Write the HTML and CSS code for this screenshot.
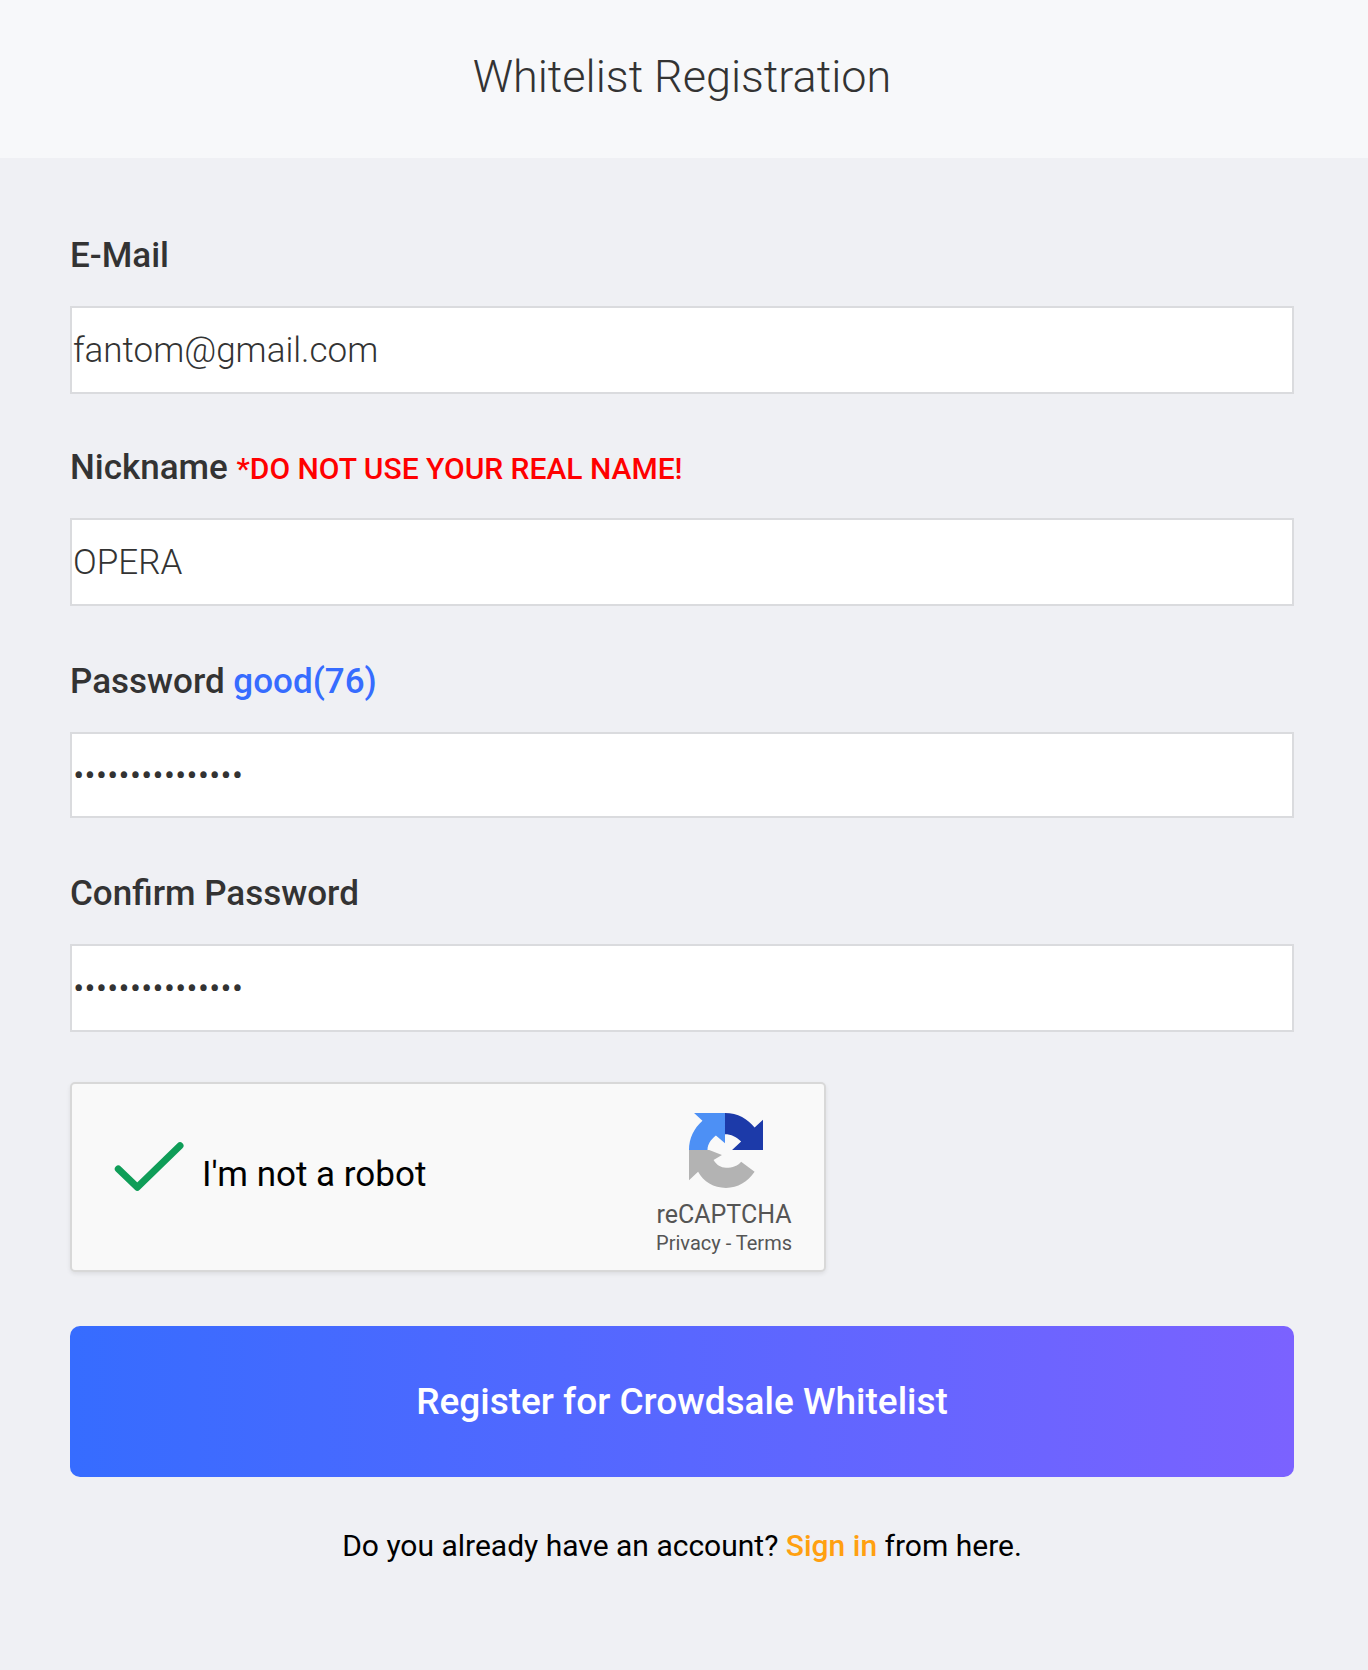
FILE: index.html
```html
<!DOCTYPE html>
<html lang="en">
<head>
    <meta charset="UTF-8">
    <meta name="viewport" content="width=device-width, initial-scale=1.0">
    <title>Whitelist Registration</title>
    <link rel="stylesheet" href="styles.css">
</head>
<body>
    <header class="page-header">
        <h1>Whitelist Registration</h1>
    </header>

    <form class="register-form">
        <div class="field field-email">
            <label for="email">E-Mail</label>
            <input class="text-input" id="email" type="text" value="fantom@gmail.com">
        </div>

        <div class="field field-nickname">
            <label for="nickname">Nickname <span class="warning">*DO NOT USE YOUR REAL NAME!</span></label>
            <input class="text-input" id="nickname" type="text" value="OPERA">
        </div>

        <div class="field field-password">
            <label for="password">Password <span class="strength">good(76)</span></label>
            <input class="text-input" id="password" type="password" value="abcdefghijklmno">
        </div>

        <div class="field field-confirm">
            <label for="confirm">Confirm Password</label>
            <input class="text-input" id="confirm" type="password" value="abcdefghijklmno">
        </div>

        <div class="captcha">
            <svg class="captcha-check" viewBox="0 0 70 52">
                <path d="M4.3 28 L23.3 46.3 L66 4.7" fill="none" stroke="#0f9d58" stroke-width="7" stroke-linecap="round" stroke-linejoin="round"/>
            </svg>
            <span class="captcha-text">I'm not a robot</span>
            <div class="captcha-brand">
                <svg class="captcha-logo" viewBox="15 15 220 223">
                    <path fill="#4d90f5" d="M30 15 H122 V105 L95 82 C80 94 70 108 70 125 H15 C15 90 30 60 55 38 Z"/>
                    <path fill="#1c3aa9" d="M122 15 C160 15 190 33 210 58 L235 35 V125 H143 L170 100 C157 86 140 78 122 78 Z"/>
                    <path fill="#b3b3b3" d="M15 125 H75 L113 140 L88 155 C97 170 110 178 125 178 C145 178 160 172 170 160 L210 190 C190 220 160 238 125 238 C88 238 58 220 42 190 L15 215 Z"/>
                </svg>
                <div class="captcha-name">reCAPTCHA</div>
                <div class="captcha-links">Privacy - Terms</div>
            </div>
        </div>

        <button class="btn-register" type="button">Register for Crowdsale Whitelist</button>

        <p class="signin">Do you already have an account? <a href="#">Sign in</a> from here.</p>
    </form>
</body>
</html>
```

FILE: styles.css
```css
body {
    font-family: Roboto, 'Liberation Sans', sans-serif;
    background-color: #eff0f4;
    color: #333;
    margin: 0;
}

.page-header {
    box-sizing: border-box;
    background-color: #f7f8fa;
    height: 158px;
    padding: 0 74px 6px 70px;
    display: flex;
    justify-content: center;
    align-items: center;
}

h1 {
    font-size: 45px;
    font-weight: 300;
    margin: 0;
}

.register-form {
    padding: 78px 74px 0 70px;
}

.field {
    margin-bottom: 55px;
}

.field label {
    display: block;
    font-size: 35px;
    font-weight: 500;
    line-height: 40px;
    margin-bottom: 30px;
}

.field-email {
    margin-bottom: 54px;
}

.field-nickname {
    margin-bottom: 56px;
}

.field-password {
    margin-bottom: 56px;
}

.field-password .text-input {
    height: 86px;
}

.field-confirm {
    margin-bottom: 50px;
}

.warning {
    color: #ff0000;
    font-size: 30px;
    line-height: 1;
}

.strength {
    color: #366cff;
}

.text-input {
    display: block;
    box-sizing: border-box;
    width: 100%;
    height: 88px;
    padding: 0 1px;
    background-color: #fff;
    border: 2px solid #dadbde;
    font-family: Roboto, sans-serif;
    font-size: 35px;
    font-weight: 300;
    color: #333;
}

.captcha {
    box-sizing: border-box;
    width: 756px;
    height: 190px;
    padding: 0 32px 0 42px;
    background-color: #f9f9f9;
    border: 2px solid #d8d8d8;
    border-radius: 5px;
    box-shadow: 0 2px 4px rgba(0, 0, 0, 0.08);
    display: flex;
    align-items: flex-start;
}

.captcha-check {
    width: 70px;
    height: 52px;
    margin: 57px 18px 0 0;
}

.captcha-text {
    flex: 1;
    margin-top: 71px;
    font-size: 35px;
    line-height: 40px;
    color: #000;
}

.captcha-brand {
    margin-top: 29px;
    text-align: center;
    color: #555;
}

.captcha-logo {
    display: block;
    width: 74px;
    height: 75px;
    margin: 0 0 12px 33px;
}

.captcha-name {
    font-size: 25px;
    line-height: 30px;
}

.captcha-links {
    font-size: 20px;
    line-height: 24px;
    margin-top: 1px;
}

.btn-register {
    display: block;
    width: 100%;
    height: 151px;
    margin-top: 54px;
    background: linear-gradient(90deg, #366cff, #7b62ff);
    border: none;
    border-radius: 10px;
    color: #fff;
    font-family: Roboto, sans-serif;
    font-size: 37px;
    font-weight: 500;
}

.signin {
    margin: 47px 0 0;
    text-align: center;
    font-size: 30px;
    line-height: 44px;
    color: #000;
}

.signin a {
    color: #ffa010;
    font-weight: 500;
    text-decoration: none;
}
```
